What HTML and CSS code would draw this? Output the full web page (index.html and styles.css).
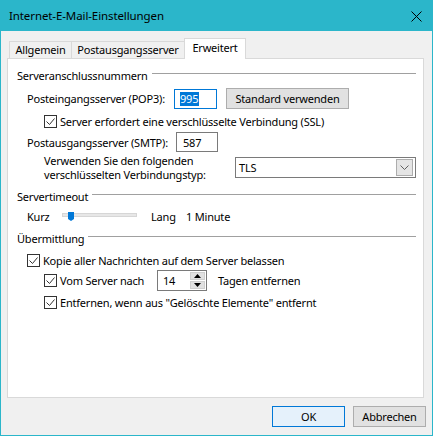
FILE: index.html
```html
<!DOCTYPE html>
<html lang="de">
<head>
<meta charset="utf-8">
<title>Internet-E-Mail-Einstellungen</title>
<link rel="stylesheet" href="styles.css">
</head>
<body>
<div class="window">
  <div class="titlebar">
    <span class="title">Internet-E-Mail-Einstellungen</span>
    <svg class="close" width="11" height="11" viewBox="0 0 11 11"><path d="M0.5 0.5 L10.5 10.5 M10.5 0.5 L0.5 10.5" stroke="#000" stroke-width="1" fill="none"/></svg>
  </div>
  <div class="body">
    <div class="tabs">
      <div class="tab t1">Allgemein</div>
      <div class="tab t2">Postausgangsserver</div>
      <div class="tab t3 active">Erweitert</div>
    </div>
    <div class="panel">
      <div class="group-title">Serveranschlussnummern</div>
      <div class="row r-pop lvl1">
        <span class="lbl w-pop">Posteingangsserver (POP3):</span>
        <div class="field focused"><span class="sel">995</span></div>
        <div class="btn std">Standard verwenden</div>
      </div>
      <div class="row r-ssl lvl2">
        <span class="cb"><svg width="11" height="11" viewBox="0 0 11 11"><path d="M1.5 5.5 L4.5 8.5 L9.5 2.5" stroke="#333" stroke-width="1" fill="none"/></svg></span>
        <span class="cb-lbl">Server erfordert eine verschlüsselte Verbindung (SSL)</span>
      </div>
      <div class="row r-smtp lvl1">
        <span class="lbl w-smtp">Postausgangsserver (SMTP):</span>
        <div class="field plain">587</div>
      </div>
      <div class="row r-enc lvl2">
        <span class="lbl w-enc two">Verwenden Sie den folgenden<br>verschlüsselten Verbindungstyp:</span>
        <div class="combo">
          <span class="combo-val">TLS</span>
          <span class="combo-btn"><svg width="9" height="5" viewBox="0 0 9 5"><path d="M0.5 0.5 L4.5 4.5 L8.5 0.5" stroke="#606060" stroke-width="1" fill="none"/></svg></span>
        </div>
      </div>
      <div class="group-title g2">Servertimeout</div>
      <div class="row r-slider lvl1">
        <span class="lbl w-kurz">Kurz</span>
        <div class="slider">
          <div class="track"></div>
          <svg class="thumb" width="6" height="9" viewBox="0 0 6 9"><path d="M0 0 H6 V7 L3 9 L0 7 Z" fill="#0078d7"/></svg>
        </div>
        <span class="lbl w-lang">Lang</span>
        <span class="lbl">1 Minute</span>
      </div>
      <div class="group-title g3">Übermittlung</div>
      <div class="row r-kopie lvl1">
        <span class="cb"><svg width="11" height="11" viewBox="0 0 11 11"><path d="M1.5 5.5 L4.5 8.5 L9.5 2.5" stroke="#333" stroke-width="1" fill="none"/></svg></span>
        <span class="cb-lbl">Kopie aller Nachrichten auf dem Server belassen</span>
      </div>
      <div class="row r-vom lvl2">
        <span class="cb"><svg width="11" height="11" viewBox="0 0 11 11"><path d="M1.5 5.5 L4.5 8.5 L9.5 2.5" stroke="#333" stroke-width="1" fill="none"/></svg></span>
        <span class="cb-lbl w-vom">Vom Server nach</span>
        <div class="spinner">
          <span class="spin-val">14</span>
          <div class="spin-btns">
            <span class="spin-b up"><svg width="7" height="4" viewBox="0 0 7 4"><path d="M3.5 0 L7 4 H0 Z" fill="#000"/></svg></span>
            <span class="spin-b down"><svg width="7" height="4" viewBox="0 0 7 4"><path d="M0 0 H7 L3.5 4 Z" fill="#000"/></svg></span>
          </div>
        </div>
        <span class="lbl tagen">Tagen entfernen</span>
      </div>
      <div class="row r-entf lvl2">
        <span class="cb"><svg width="11" height="11" viewBox="0 0 11 11"><path d="M1.5 5.5 L4.5 8.5 L9.5 2.5" stroke="#333" stroke-width="1" fill="none"/></svg></span>
        <span class="cb-lbl">Entfernen, wenn aus "Gelöschte Elemente" entfernt</span>
      </div>
    </div>
    <div class="footer">
      <div class="btn dlg ok">OK</div>
      <div class="btn dlg">Abbrechen</div>
    </div>
  </div>
</div>
</body>
</html>
```
FILE: styles.css
```css
* { box-sizing: border-box; }
html, body { margin: 0; padding: 0; }
body {
  width: 433px;
  height: 436px;
  font-family: "Noto Sans", "Open Sans", sans-serif;
  font-size: 11px;
  letter-spacing: -0.2px;
  color: #000;
  background: #f0f0f0;
  overflow: hidden;
}
.window {
  width: 433px;
  height: 436px;
  border: 1px solid #2bb6ca;
  background: #f0f0f0;
  display: flex;
  flex-direction: column;
}
.titlebar {
  height: 30px;
  background: #2bb6ca;
  display: flex;
  align-items: center;
  padding-left: 8px;
  padding-right: 10px;
  justify-content: space-between;
}
.title {
  font-size: 11.5px;
  letter-spacing: -0.1px;
  line-height: 16px;
}
.close { display: block; }
.body {
  flex: 1;
  padding: 7px 6px 0 6px;
  display: flex;
  flex-direction: column;
}
.tabs {
  display: flex;
  align-items: flex-end;
  height: 20px;
  padding-left: 2px;
}
.tab {
  height: 17px;
  border: 1px solid #d9d9d9;
  border-bottom: none;
  background: #f0f0f0;
  display: flex;
  align-items: center;
  justify-content: center;
  line-height: 14px;
  padding-bottom: 1px;
}
.t1 { width: 63px; }
.t2 { width: 114px; margin-left: -1px; }
.t3 { width: 62px; margin-left: -1px; }
.tab.active {
  height: 21px;
  margin-bottom: -1px;
  background: #fff;
  position: relative;
  z-index: 1;
  padding-bottom: 3px;
}
.panel {
  width: 417px;
  height: 340px;
  border: 1px solid #d9d9d9;
  background: #fff;
  padding: 7px 7px 0 9px;
}
.group-title {
  height: 18px;
  display: flex;
  align-items: center;
  white-space: nowrap;
}
.group-title::after {
  content: "";
  flex: 1;
  height: 1px;
  background: #a0a0a0;
  margin-left: 4px;
  margin-bottom: 4px;
}
.g2 { margin-top: 5px; }
.g3 { margin-top: 5px; }
.row {
  display: flex;
  align-items: center;
  white-space: nowrap;
}
.lvl1 { padding-left: 10px; }
.lvl2 { padding-left: 27px; }
.lbl { display: block; }
.w-pop { width: 147px; }
.w-smtp { width: 149px; }
.w-enc { width: 191px; }
.two { line-height: 14px; }
.w-kurz { width: 35px; }
.w-lang { margin-left: 14px; width: 35px; }
.r-pop { margin-top: 4px; height: 21px; }
.r-ssl { margin-top: 5px; height: 14px; }
.r-smtp { margin-top: 4px; height: 20px; }
.r-enc { margin-top: 2px; height: 28px; }
.r-slider { margin-top: 3px; height: 16px; }
.r-kopie { margin-top: 6px; height: 14px; }
.r-vom { margin-top: 3px; height: 21px; }
.r-entf { margin-top: 4px; height: 14px; }
.field {
  height: 20px;
  border: 1px solid #7a7a7a;
  background: #fff;
  display: flex;
  align-items: center;
}
.field.focused {
  width: 43px;
  border-color: #0078d7;
  padding-left: 5px;
}
.sel {
  background: #0078d7;
  color: #fff;
  line-height: 14px;
  padding: 0 1px 0 0;
}
.field.plain {
  width: 42px;
  padding-left: 6px;
}
.btn {
  height: 21px;
  border: 1px solid #adadad;
  background: #e1e1e1;
  display: flex;
  align-items: center;
  justify-content: center;
}
.std { width: 123px; margin-left: 9px; }
.cb {
  width: 13px;
  height: 13px;
  border: 1px solid #333;
  background: #fff;
  display: block;
  flex: none;
}
.cb svg { display: block; }
.cb-lbl { margin-left: 3px; display: block; }
.w-vom { width: 97px; }
.combo {
  width: 181px;
  height: 21px;
  border: 1px solid #7a7a7a;
  background: #fff;
  display: flex;
  align-items: center;
  justify-content: space-between;
  padding-left: 3px;
  padding-right: 2px;
  margin-top: -1px;
}
.combo-btn {
  width: 17px;
  height: 17px;
  border: 1px solid #adadad;
  background: #e5e5e5;
  display: flex;
  align-items: center;
  justify-content: center;
}
.combo-btn svg { display: block; }
.slider {
  width: 75px;
  height: 9px;
  position: relative;
  padding-top: 1px;
}
.track {
  height: 4px;
  border: 1px solid #d6d6d6;
  background: #e7e7e7;
}
.thumb {
  position: absolute;
  left: 6px;
  top: 0;
  display: block;
}
.spinner {
  width: 50px;
  height: 21px;
  border: 1px solid #7a7a7a;
  background: #fff;
  display: flex;
  align-items: center;
  justify-content: space-between;
  padding-left: 5px;
  padding-right: 1px;
}
.spin-btns {
  width: 15px;
  height: 17px;
  display: flex;
  flex-direction: column;
  gap: 1px;
}
.spin-b {
  flex: 1;
  background: #e1e1e1;
  border: 1px solid #cfcfcf;
  display: flex;
  align-items: center;
  justify-content: center;
}
.spin-b svg { display: block; }
.tagen { margin-left: 11px; }
.footer {
  display: flex;
  justify-content: flex-end;
  gap: 8px;
  margin-top: 8px;
}
.dlg { width: 73px; }
.ok {
  border-color: #0078d7;
  background: #e5f1fb;
}
```
